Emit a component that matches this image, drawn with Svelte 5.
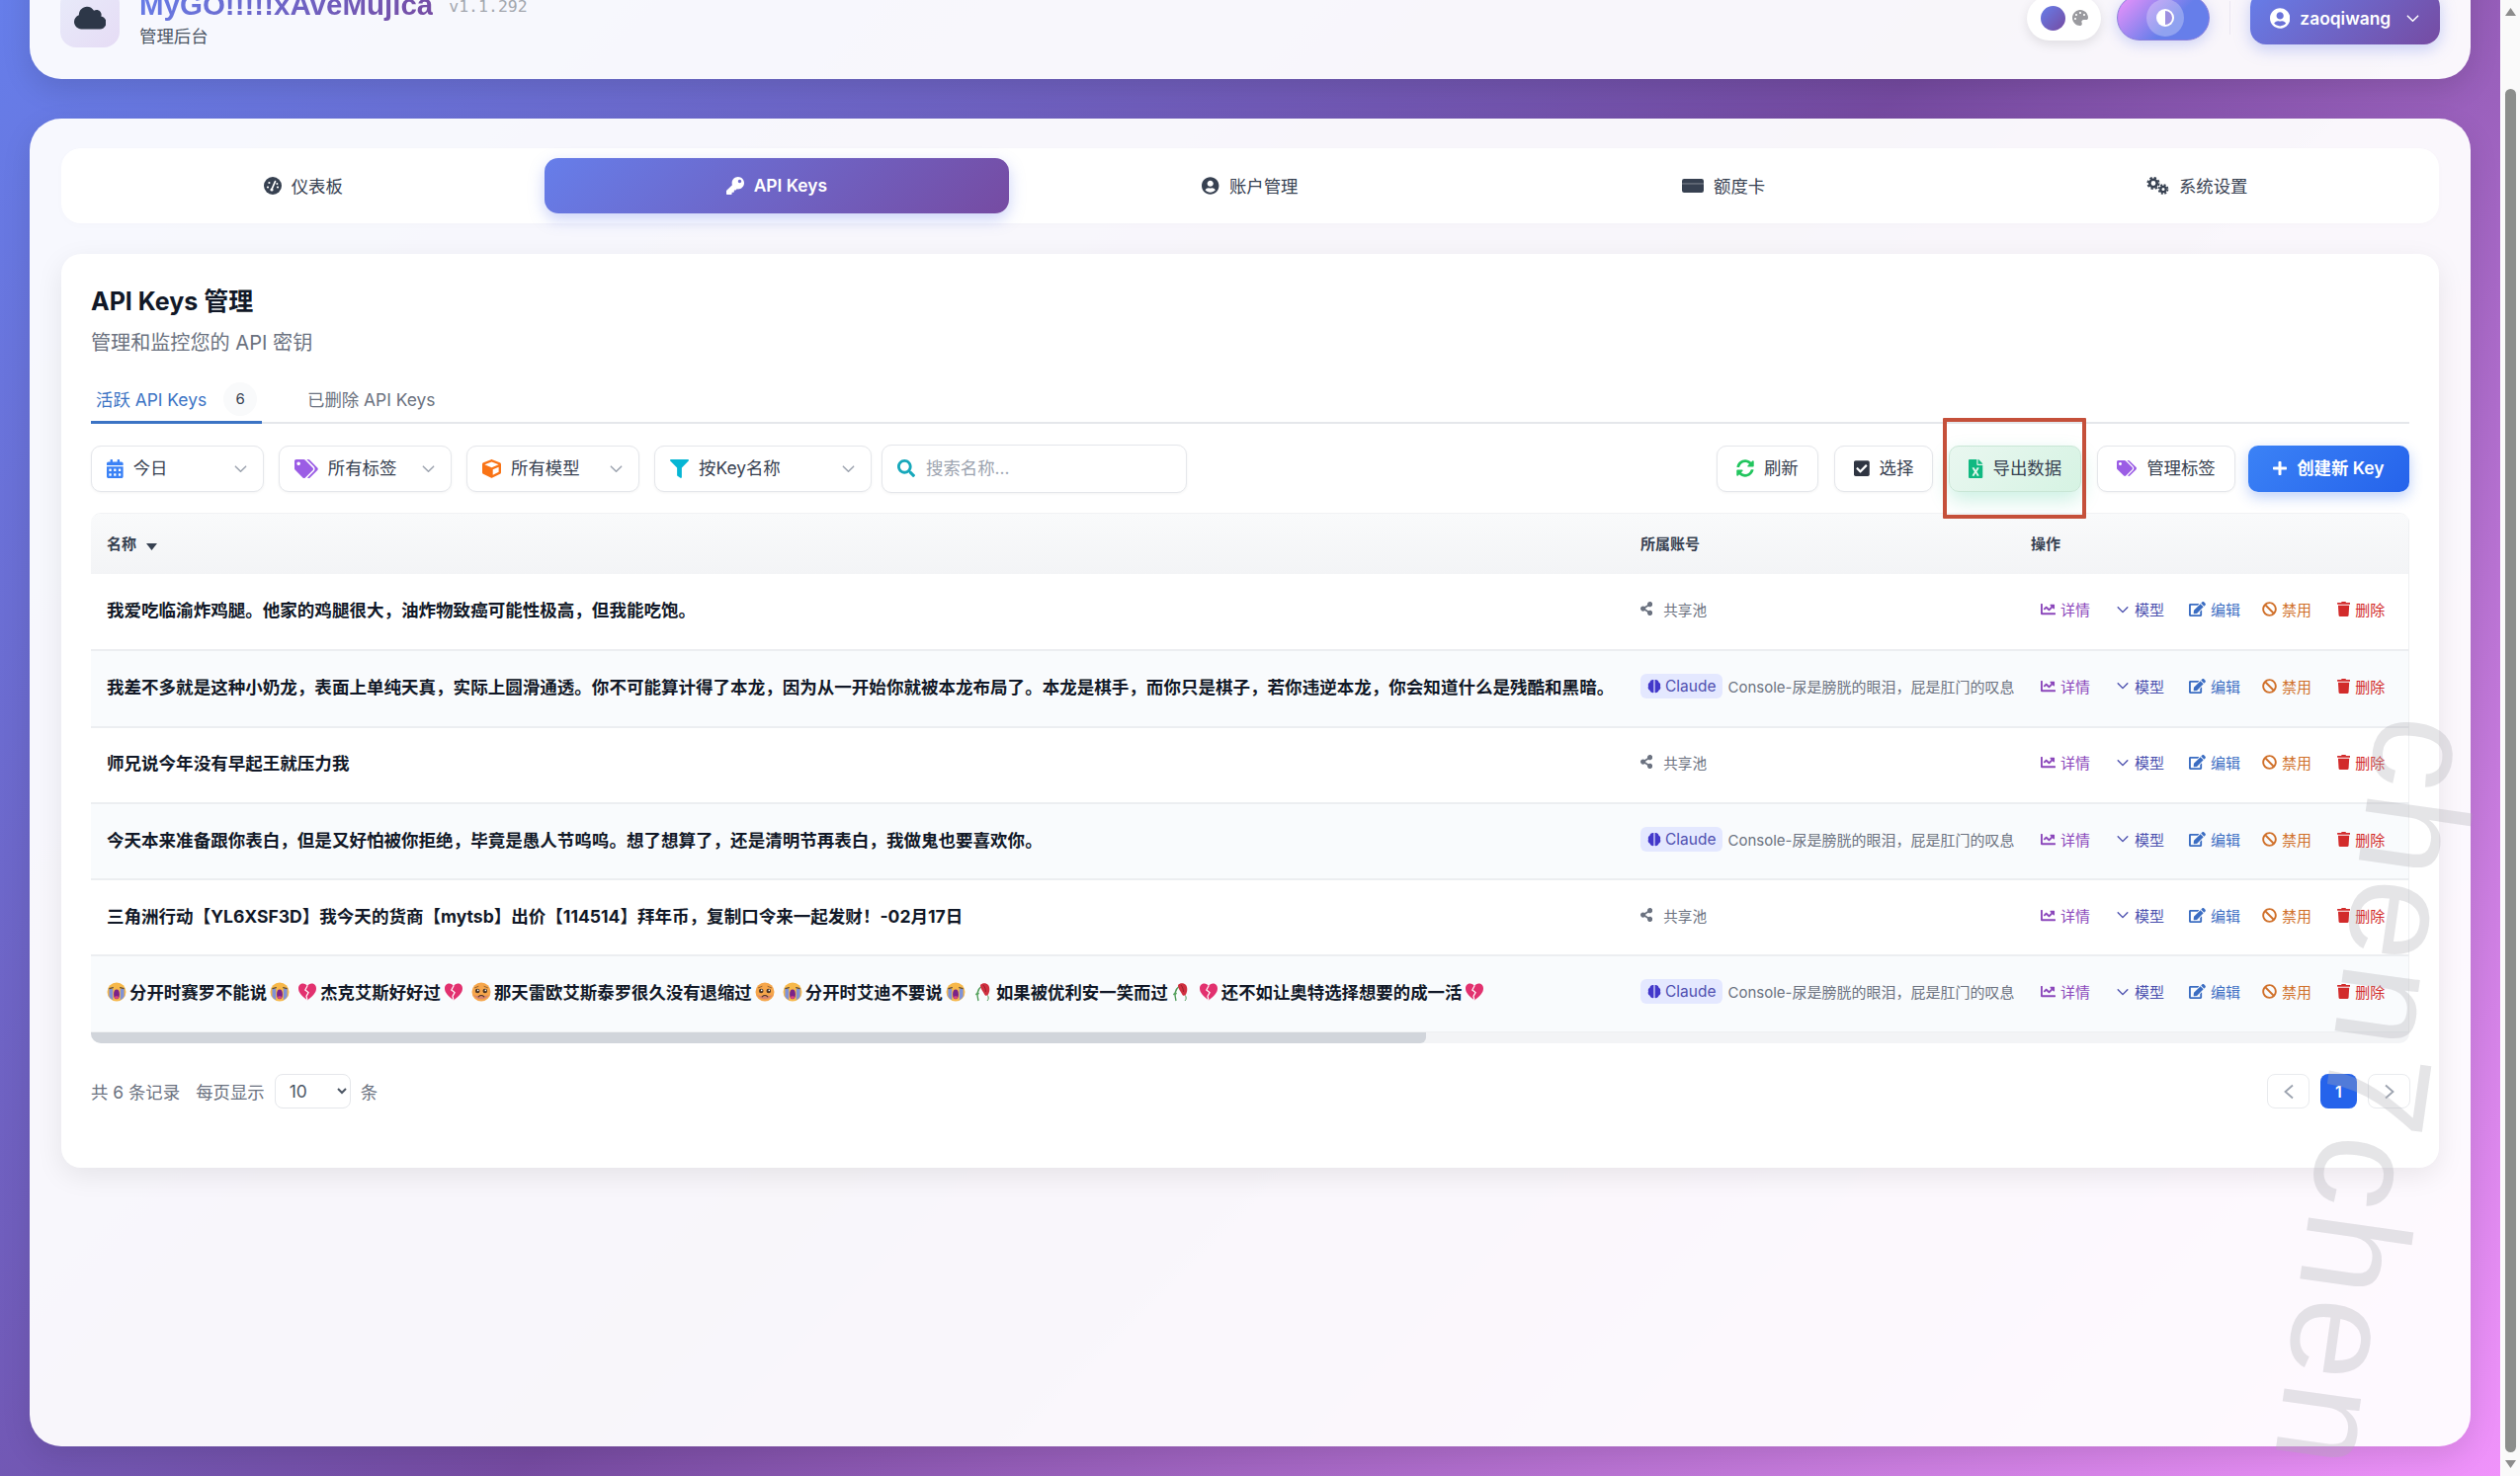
<script>
const ICONS = {
  cloud:[640,512,"M537.6 226.6c4.1-10.7 6.4-22.4 6.4-34.6 0-53-43-96-96-96-19.7 0-38.1 6-53.3 16.2C367 64.2 315.3 32 256 32c-88.4 0-160 71.6-160 160 0 2.7.1 5.4.2 8.1C40.2 219.8 0 273.2 0 336c0 79.5 64.5 144 144 144h368c70.7 0 128-57.3 128-128 0-61.9-44-113.6-102.4-125.4z"],
  key:[512,512,"M512 176.001C512 273.203 433.202 352 336 352c-11.22 0-22.19-1.062-32.827-3.069l-24.012 27.014A23.999 23.999 0 0 1 261.223 384H224v40c0 13.255-10.745 24-24 24h-40v40c0 13.255-10.745 24-24 24H24c-13.255 0-24-10.745-24-24v-78.059c0-6.365 2.529-12.47 7.029-16.971l161.802-161.802C163.108 213.814 160 195.271 160 176 160 78.798 238.797.001 335.999 0 433.488-.001 512 78.511 512 176.001zM336 128c0 26.51 21.49 48 48 48s48-21.49 48-48-21.49-48-48-48-48 21.49-48 48z"],
  user:[496,512,"M248 8C111 8 0 119 0 256s111 248 248 248 248-111 248-248S385 8 248 8zm0 96c48.6 0 88 39.4 88 88s-39.4 88-88 88-88-39.4-88-88 39.4-88 88-88zm0 344c-58.7 0-111.3-26.6-146.5-68.2 18.8-35.4 55.6-59.8 98.5-59.8 2.4 0 4.8.4 7.1 1.1 13 4.2 26.6 6.9 40.9 6.9 14.3 0 28-2.7 40.9-6.9 2.3-.7 4.7-1.1 7.1-1.1 42.9 0 79.7 24.4 98.5 59.8C359.3 421.4 306.7 448 248 448z"],
  tags:[640,512,"M497.941 225.941L286.059 14.059A48 48 0 0 0 252.118 0H48C21.49 0 0 21.49 0 48v204.118a48 48 0 0 0 14.059 33.941l211.882 211.882c18.744 18.745 49.136 18.746 67.882 0l204.118-204.118c18.745-18.745 18.745-49.137 0-67.882zM112 160c-26.51 0-48-21.49-48-48s21.49-48 48-48 48 21.49 48 48-21.49 48-48 48zm513.941 133.823L421.823 497.941c-18.745 18.745-49.137 18.745-67.882 0l-.36-.36L527.64 323.522c16.999-16.999 26.36-39.6 26.36-63.64s-9.362-46.641-26.36-63.64L331.397 0h48.721a48 48 0 0 1 33.941 14.059l211.882 211.882c18.745 18.745 18.745 49.137 0 67.882z"],
  filter:[512,512,"M487.976 0H24.028C2.71 0-8.047 25.866 7.058 40.971L192 225.941V432c0 7.831 3.821 15.17 10.237 19.662l80 55.98C298.02 518.69 320 507.493 320 487.98V225.941l184.947-184.97C520.021 25.896 509.338 0 487.976 0z"],
  search:[512,512,"M505 442.7L405.3 343c-4.5-4.5-10.6-7-17-7H372c27.6-35.3 44-79.7 44-128C416 93.1 322.9 0 208 0S0 93.1 0 208s93.1 208 208 208c48.3 0 92.7-16.4 128-44v16.3c0 6.4 2.5 12.5 7 17l99.7 99.7c9.4 9.4 24.6 9.4 33.9 0l28.3-28.3c9.4-9.4 9.4-24.6.1-34zM208 336c-70.7 0-128-57.2-128-128 0-70.7 57.2-128 128-128 70.7 0 128 57.2 128 128 0 70.7-57.2 128-128 128z"],
  sync:[512,512,"M370.72 133.28C339.458 104.008 298.888 87.962 255.848 88c-77.458.068-144.328 53.178-162.791 126.85-1.344 5.363-6.122 9.15-11.651 9.15H24.103c-7.498 0-13.194-6.807-11.807-14.176C33.933 94.924 134.813 8 256 8c66.448 0 126.791 26.136 171.315 68.685L463.03 40.97C478.149 25.851 504 36.559 504 57.941V192c0 13.255-10.745 24-24 24H345.941c-21.382 0-32.09-25.851-16.971-40.971l41.75-41.749zM32 296h134.059c21.382 0 32.09 25.851 16.971 40.971l-41.75 41.75c31.262 29.273 71.835 45.319 114.876 45.28 77.418-.07 144.315-53.144 162.787-126.849 1.344-5.363 6.122-9.15 11.651-9.15h57.304c7.498 0 13.194 6.807 11.807 14.176C478.067 417.076 377.187 504 256 504c-66.448 0-126.791-26.136-171.315-68.685L48.97 471.03C33.851 486.149 8 475.441 8 454.059V320c0-13.255 10.745-24 24-24z"],
  check:[448,512,"M400 480H48c-26.51 0-48-21.49-48-48V80c0-26.51 21.49-48 48-48h352c26.51 0 48 21.49 48 48v352c0 26.51-21.49 48-48 48zm-204.686-98.059l184-184c6.248-6.248 6.248-16.379 0-22.627l-22.627-22.627c-6.248-6.248-16.379-6.249-22.628 0L184 302.745l-69.059-69.059c-6.248-6.248-16.379-6.248-22.628 0L69.686 256.313c-6.248 6.248-6.248 16.379 0 22.627l104 104c6.249 6.25 16.379 6.25 22.628.001z"],
  excel:[384,512,"M224 136V0H24C10.7 0 0 10.7 0 24v464c0 13.3 10.7 24 24 24h336c13.3 0 24-10.7 24-24V160H248c-13.2 0-24-10.8-24-24zm60.1 106.5L224 336l60.1 93.5c5.1 8-.6 18.5-10.1 18.5h-34.9c-4.4 0-8.5-2.4-10.6-6.3C208.9 405.5 192 373 192 373c-6.4 14.8-10 20-36.6 68.8-2.1 3.9-6.1 6.3-10.5 6.3H110c-9.5 0-15.2-10.5-10.1-18.5l60.3-93.5-60.3-93.5c-5.2-8 .6-18.5 10.1-18.5h34.8c4.4 0 8.5 2.4 10.6 6.3 26.1 48.8 20 33.6 36.6 68.5 0 0 6.1-11.7 36.6-68.5 2.1-3.9 6.2-6.3 10.6-6.3H274c9.5-.1 15.2 10.4 10.1 18.4zM384 121.9v6.1H256V0h6.1c6.4 0 12.5 2.5 17 7l97.9 98c4.5 4.5 7 10.6 7 16.9z"],
  edit:[576,512,"M402.6 83.2l90.2 90.2c3.8 3.8 3.8 10 0 13.8L274.4 405.6l-92.8 10.3c-12.4 1.4-22.9-9.1-21.5-21.5l10.3-92.8L388.8 83.2c3.8-3.8 10-3.8 13.8 0zm162-22.9l-48.8-48.8c-15.2-15.2-39.9-15.2-55.2 0l-35.4 35.4c-3.8 3.8-3.8 10 0 13.8l90.2 90.2c3.8 3.8 10 3.8 13.8 0l35.4-35.4c15.2-15.3 15.2-40 0-55.2zM384 346.2V448H64V128h229.8c3.2 0 6.2-1.3 8.5-3.5l40-40c7.6-7.6 2.2-20.5-8.5-20.5H48C21.5 64 0 85.5 0 112v352c0 26.5 21.5 48 48 48h352c26.5 0 48-21.5 48-48V306.2c0-10.7-12.9-16-20.5-8.5l-40 40c-2.2 2.3-3.5 5.3-3.5 8.5z"],
  ban:[512,512,"M256 8C119.034 8 8 119.033 8 256s111.034 248 248 248 248-111.034 248-248S392.967 8 256 8zm130.108 117.892c65.448 65.448 70 165.481 20.677 235.637L150.47 105.216c70.204-49.356 170.226-44.735 235.638 20.676zM125.892 386.108c-65.448-65.448-70-165.481-20.677-235.637L361.53 406.784c-70.203 49.356-170.226 44.736-235.638-20.676z"],
  trash:[448,512,"M432 32H312l-9.4-18.7A24 24 0 0 0 281.1 0H166.8a23.72 23.72 0 0 0-21.4 13.3L136 32H16A16 16 0 0 0 0 48v32a16 16 0 0 0 16 16h416a16 16 0 0 0 16-16V48a16 16 0 0 0-16-16zM53.2 467a48 48 0 0 0 47.9 45h245.8a48 48 0 0 0 47.9-45L416 128H32z"],
  chart:[512,512,"M496 384H64V80c0-8.84-7.16-16-16-16H16C7.16 64 0 71.16 0 80v336c0 17.67 14.33 32 32 32h464c8.84 0 16-7.16 16-16v-32c0-8.84-7.16-16-16-16zM464 96H345.94c-21.38 0-32.09 25.85-16.97 40.97l32.4 32.4L288 242.75l-73.37-73.37c-12.5-12.5-32.76-12.5-45.25 0l-68.69 68.69c-6.25 6.25-6.25 16.38 0 22.63l22.62 22.62c6.25 6.25 16.38 6.25 22.63 0L192 237.25l73.37 73.37c12.5 12.5 32.76 12.5 45.25 0l96-96 32.4 32.4c15.12 15.12 40.97 4.41 40.97-16.97V112c.01-8.84-7.15-16-15.99-16z"],
  palette:[512,512,"M204.3 5C104.9 24.4 24.8 104.3 5.2 203.4c-37 187 131.7 326.4 258.8 306.7 41.2-6.4 61.4-54.6 42.5-91.7-23.1-45.4 9.9-98.4 60.9-98.4h79.7c35.8 0 64.8-29.6 64.9-65.3C511.5 97.1 368.1-26.9 204.3 5zM96 320c-17.7 0-32-14.3-32-32s14.3-32 32-32 32 14.3 32 32-14.3 32-32 32zm32-128c-17.7 0-32-14.3-32-32s14.3-32 32-32 32 14.3 32 32-14.3 32-32 32zm128-64c-17.7 0-32-14.3-32-32s14.3-32 32-32 32 14.3 32 32-14.3 32-32 32zm128 64c-17.7 0-32-14.3-32-32s14.3-32 32-32 32 14.3 32 32-14.3 32-32 32z"],
  cube:[512,512,"M239.1 6.3l-208 78c-18.7 7-31.1 25-31.1 45v225.1c0 18.2 10.3 34.8 26.5 42.9l208 104c13.5 6.8 29.4 6.8 42.9 0l208-104c16.3-8.1 26.5-24.8 26.5-42.9V129.3c0-20-12.4-37.9-31.1-44.9l-208-78C262 2.2 250 2.2 239.1 6.3zM256 68.4l192 72v1.1l-192 78-192-78v-1.1l192-72zm32 356V275.5l160-65v133.9l-160 80z"],
  share:[448,512,"M352 320c-22.608 0-43.387 7.819-59.79 20.895l-102.486-64.054a96.551 96.551 0 0 0 0-41.683l102.486-64.054C308.613 184.181 329.392 192 352 192c53.019 0 96-42.981 96-96S405.019 0 352 0s-96 42.981-96 96c0 7.158.79 14.13 2.276 20.841L155.79 180.895C139.387 167.819 118.608 160 96 160c-53.019 0-96 42.981-96 96s42.981 96 96 96c22.608 0 43.387-7.819 59.79-20.895l102.486 64.054A96.301 96.301 0 0 0 256 416c0 53.019 42.981 96 96 96s96-42.981 96-96-42.981-96-96-96z"],
  calendar:[448,512,"M0 464c0 26.5 21.5 48 48 48h352c26.5 0 48-21.5 48-48V192H0v272zm320-196c0-6.6 5.4-12 12-12h40c6.6 0 12 5.4 12 12v40c0 6.6-5.4 12-12 12h-40c-6.6 0-12-5.4-12-12v-40zm0 128c0-6.6 5.4-12 12-12h40c6.6 0 12 5.4 12 12v40c0 6.6-5.4 12-12 12h-40c-6.6 0-12-5.4-12-12v-40zM192 268c0-6.6 5.4-12 12-12h40c6.6 0 12 5.4 12 12v40c0 6.6-5.4 12-12 12h-40c-6.6 0-12-5.4-12-12v-40zm0 128c0-6.6 5.4-12 12-12h40c6.6 0 12 5.4 12 12v40c0 6.6-5.4 12-12 12h-40c-6.6 0-12-5.4-12-12v-40zM64 268c0-6.6 5.4-12 12-12h40c6.6 0 12 5.4 12 12v40c0 6.6-5.4 12-12 12H76c-6.6 0-12-5.4-12-12v-40zm0 128c0-6.6 5.4-12 12-12h40c6.6 0 12 5.4 12 12v40c0 6.6-5.4 12-12 12H76c-6.6 0-12-5.4-12-12v-40zM400 64h-48V16c0-8.8-7.2-16-16-16h-32c-8.8 0-16 7.2-16 16v48H160V16c0-8.8-7.2-16-16-16h-32c-8.8 0-16 7.2-16 16v48H48C21.5 64 0 85.5 0 112v48h448v-48c0-26.5-21.5-48-48-48z"],
  plus:[448,512,"M416 208H272V64c0-17.67-14.33-32-32-32h-32c-17.67 0-32 14.33-32 32v144H32c-17.67 0-32 14.33-32 32v32c0 17.67 14.33 32 32 32h144v144c0 17.67 14.33 32 32 32h32c17.67 0 32-14.33 32-32V304h144c17.67 0 32-14.33 32-32v-32c0-17.67-14.33-32-32-32z"]
};

const navs = [
  { id: 'gauge', label: '仪表板' },
  { id: 'key', label: 'API Keys', active: true },
  { id: 'user', label: '账户管理' },
  { id: 'card', label: '额度卡' },
  { id: 'cogs', label: '系统设置' }
];
const filters = [
  { icon: 'calendar', label: '今日', cls: 'blue', wide: false },
  { icon: 'tags', label: '所有标签', cls: 'violet', wide: false },
  { icon: 'cube', label: '所有模型', cls: 'orange', wide: false },
  { icon: 'filter', label: '按Key名称', cls: 'cyan', wide: true }
];
const rows = [
  { text: '我爱吃临渝炸鸡腿。他家的鸡腿很大，油炸物致癌可能性极高，但我能吃饱。', shared: true },
  { text: '我差不多就是这种小奶龙，表面上单纯天真，实际上圆滑通透。你不可能算计得了本龙，因为从一开始你就被本龙布局了。本龙是棋手，而你只是棋子，若你违逆本龙，你会知道什么是残酷和黑暗。', shared: false },
  { text: '师兄说今年没有早起王就压力我', shared: true },
  { text: '今天本来准备跟你表白，但是又好怕被你拒绝，毕竟是愚人节呜呜。想了想算了，还是清明节再表白，我做鬼也要喜欢你。', shared: false },
  { text: '三角洲行动【YL6XSF3D】我今天的货商【mytsb】出价【114514】拜年币，复制口令来一起发财！-02月17日', shared: true },
  { parts: [
      ['cry', '分开时赛罗不能说'],
      ['heart', '杰克艾斯好好过'],
      ['sad', '那天雷欧艾斯泰罗很久没有退缩过'],
      ['cry', '分开时艾迪不要说'],
      ['rose', '如果被优利安一笑而过'],
      ['heart', '还不如让奥特选择想要的成一活']
    ], shared: false }
];
</script>

{#snippet ic(name, size)}
  <svg class="ic" width={size * ICONS[name][0] / ICONS[name][1]} height={size} viewBox="0 0 {ICONS[name][0]} {ICONS[name][1]}" aria-hidden="true"><path fill="currentColor" d={ICONS[name][2]} /></svg>
{/snippet}

{#snippet chev(size)}
  <svg class="ic" width={size} height={size} viewBox="0 0 16 16" aria-hidden="true"><path d="M2.5 5.5 8 11l5.5-5.5" fill="none" stroke="currentColor" stroke-width="1.6" stroke-linecap="round" stroke-linejoin="round" /></svg>
{/snippet}

{#snippet emoji(kind)}
  <svg class="emo" width="20" height="20" viewBox="0 0 20 20" aria-hidden="true">
    {#if kind === 'cry'}
      <circle cx="10" cy="10" r="9.5" fill="#f7b84a" />
      <path d="M2.4 7h3.8v11.2a9.4 9.4 0 0 1-3.8-3.4zM13.8 7h3.8v7.8a9.4 9.4 0 0 1-3.8 3.4z" fill="#7f92d8" />
      <path d="M2.8 6.6 6.4 5.6M17.2 6.6l-3.6-1" stroke="#5b4a3a" stroke-width="1.1" stroke-linecap="round" />
      <ellipse cx="10" cy="12.4" rx="2.9" ry="4.8" fill="#7a2289" />
      <ellipse cx="10" cy="15.6" rx="2" ry="1.3" fill="#e0457f" />
    {:else if kind === 'heart'}
      <path d="M10 18.4C4 13.8 1 10.6 1 6.5 1 3.5 3.2 1.6 5.6 1.6c1.8 0 3.4 1 4.4 2.8 1-1.8 2.6-2.8 4.4-2.8C16.8 1.6 19 3.5 19 6.5c0 4.1-3 7.300-9 11.900z" fill="#e2316f" />
      <path d="M10 4 7.800 8l3.300 2.600L9 14.400 10 18.500" fill="none" stroke="#fff" stroke-width="1.200" />
    {:else if kind === 'sad'}
      <circle cx="10" cy="10" r="9.5" fill="#f6a64b" />
      <path d="M1.500 12a9.500 9.500 0 0 0 17 0c-2 3-5 1.500-8.500 1.500S3.500 15 1.500 12z" fill="#c26a8a" opacity=".55" />
      <circle cx="6.200" cy="9" r="2.300" fill="#4a3324" /><circle cx="13.800" cy="9" r="2.300" fill="#4a3324" />
      <circle cx="6.700" cy="8.400" r=".8" fill="#fff" /><circle cx="14.300" cy="8.400" r=".8" fill="#fff" />
      <path d="M7.200 14.800c1.600-1.500 4-1.500 5.600 0" fill="none" stroke="#4a3324" stroke-width="1.100" stroke-linecap="round" />
      <path d="M3.500 5.800 7 4.400M16.500 5.800 13 4.400" stroke="#8a5a2a" stroke-width=".9" stroke-linecap="round" />
    {:else}
      <path d="M5 19C3.500 14 3.500 8 8 4.500" fill="none" stroke="#4e9a57" stroke-width="1.400" />
      <path d="M6 11C3.500 10 2.500 11 2 13c2 .5 3.500 0 4-2z" fill="#5aa661" />
      <path d="M14 19c2-2 1-4 .5-5.500" fill="none" stroke="#4e9a57" stroke-width="1" />
      <path d="M7 3c2-2.500 6-2.500 8 0 2 2.800 1.500 7 0 9.500-1.200 1.800-3 1.800-3.800 0C10 9.500 7.500 8 7 3z" fill="#cf2f3f" />
      <path d="M10 3c1.500 2 2.500 4 2.500 7" fill="none" stroke="#8d1a2a" stroke-width=".8" />
    {/if}
  </svg>
{/snippet}

<div class="root">
  <div class="viewport">
    <header class="head">
      <div class="brand">
        <div class="logo">{@render ic('cloud', 26)}</div>
        <div class="brand-text">
          <div class="title-line">
            <span class="title">MyGO!!!!!xAveMujica</span>
            <span class="ver">v1.1.292</span>
          </div>
          <div class="sub">管理后台</div>
        </div>
      </div>
      <div class="head-right">
        <div class="color-pill">
          <span class="dot"></span>
          <span class="pal">{@render ic('palette', 16)}</span>
        </div>
        <div class="toggle">
          <span class="knob">
            <svg width="20" height="20" viewBox="0 0 20 20" aria-hidden="true"><circle cx="10" cy="10" r="9" fill="#fff" /><path d="M10 3a7 7 0 0 1 0 14z" fill="#9d8fe0" /></svg>
          </span>
        </div>
        <span class="vline"></span>
        <div class="userbtn">
          {@render ic('user', 21)}
          <span class="uname">zaoqiwang</span>
          {@render chev(15)}
        </div>
      </div>
    </header>

    <main class="main">
      <nav class="nav">
        {#each navs as n}
          <div class="navtab" class:active={n.active}>
            {#if n.id === 'gauge'}
              <svg class="ic" width="18" height="18" viewBox="0 0 18 18" aria-hidden="true">
                <circle cx="9" cy="9" r="9" fill="currentColor" />
                <path d="M8 12.500 11.500 4.600" stroke="#fff" stroke-width="1.700" stroke-linecap="round" />
                <circle cx="8" cy="13" r="1.600" fill="#fff" />
                <circle cx="4" cy="10.500" r="1.100" fill="#fff" /><circle cx="5.400" cy="6" r="1.100" fill="#fff" /><circle cx="14" cy="10.500" r="1.100" fill="#fff" /><circle cx="13.400" cy="7" r="1" fill="#fff" />
              </svg>
            {:else if n.id === 'cogs'}
              <svg class="ic" width="23" height="18" viewBox="0 0 23 18" aria-hidden="true">
                <circle cx="7" cy="6.500" r="3.700" fill="none" stroke="currentColor" stroke-width="2.600" />
                <circle cx="7" cy="6.500" r="5.600" fill="none" stroke="currentColor" stroke-width="1.900" stroke-dasharray="2.400 2" />
                <circle cx="17" cy="12.500" r="2.700" fill="none" stroke="currentColor" stroke-width="2.300" />
                <circle cx="17" cy="12.500" r="4.500" fill="none" stroke="currentColor" stroke-width="1.700" stroke-dasharray="2 1.550" />
              </svg>
            {:else if n.id === 'card'}
              <svg class="ic" width="22" height="18" viewBox="0 0 22 18" aria-hidden="true">
                <rect y="2" width="22" height="14" rx="2.200" fill="currentColor" />
                <rect y="6.500" width="22" height=".9" fill="#8a8f99" />
              </svg>
            {:else}
              {@render ic(n.id, 18)}
            {/if}
            <span class="lift">{n.label}</span>
          </div>
        {/each}
      </nav>

      <section class="panel">
        <h1 class="ptitle">API Keys 管理</h1>
        <p class="psub">管理和监控您的 API 密钥</p>

        <div class="tabs">
          <div class="tab on">活跃 API Keys <span class="count">6</span></div>
          <div class="tab">已删除 API Keys</div>
        </div>

        <div class="toolbar">
          <div class="tgroup">
            {#each filters as f}
              <div class="fsel" class:wide={f.wide}>
                <span class="ficon {f.cls}">{@render ic(f.icon, 19)}</span>
                <span class="ftext lift2">{f.label}</span>
                <span class="fchev">{@render chev(15)}</span>
              </div>
            {/each}
            <label class="search">
              <span class="ficon cyan2">{@render ic('search', 18)}</span>
              <input placeholder="搜索名称..." />
            </label>
          </div>
          <div class="tgroup actions-r">
            <button class="btn"><span class="green">{@render ic('sync', 18)}</span><span class="lift2">刷新</span></button>
            <button class="btn"><span class="dark">{@render ic('check', 18)}</span><span class="lift2">选择</span></button>
            <button class="btn export">
              <span class="emerald">{@render ic('excel', 19)}</span><span class="lift2">导出数据</span>
              <span class="redbox"></span>
            </button>
            <button class="btn"><span class="violet">{@render ic('tags', 16)}</span><span class="lift2">管理标签</span></button>
            <button class="btn primary">{@render ic('plus', 16)}<span class="lift2">创建新 Key</span></button>
          </div>
        </div>

        <div class="tablewrap">
          <table>
            <colgroup><col class="c1" /><col class="c2" /><col class="c3" /></colgroup>
            <thead>
              <tr>
                <th><span class="sorth">名称 <svg width="11" height="7" viewBox="0 0 11 7" aria-hidden="true"><path d="M0 0h11L5.500 7z" fill="#374151" /></svg></span></th>
                <th>所属账号</th>
                <th>操作</th>
              </tr>
            </thead>
            <tbody>
              {#each rows as r}
                <tr>
                  <td class="name">
                    {#if r.parts}
                      <span class="emorow">
                        {#each r.parts as p}
                          <span class="chunk">{@render emoji(p[0])}<span>{p[1]}</span>{@render emoji(p[0])}</span>
                        {/each}
                      </span>
                    {:else}
                      {r.text}
                    {/if}
                  </td>
                  <td>
                    {#if r.shared}
                      <span class="shared">{@render ic('share', 14)}<span>共享池</span></span>
                    {:else}
                      <span class="acct">
                        <span class="badge">
                          <svg width="14" height="15" viewBox="0 0 14 15" aria-hidden="true"><path d="M6.400 1C4.200.6 2.700 2 2.600 3.400 1 4.200.4 6 1 7.500.2 9 .8 11.200 2.500 11.800 3 13.500 4.800 14.500 6.400 14zM7.600 1c2.200-.4 3.700 1 3.800 2.400 1.600.8 2.200 2.600 1.600 4.100.8 1.500.2 3.700-1.500 4.300-.5 1.700-2.300 2.700-3.900 2.200z" fill="#4338ca" /></svg>
                          Claude
                        </span>
                        <span class="cons">Console-尿是膀胱的眼泪，屁是肛门的叹息</span>
                      </span>
                    {/if}
                  </td>
                  <td>
                    <div class="ops">
                      <span class="op o1">{@render ic('chart', 15)}详情</span>
                      <span class="op o2">{@render chev(14)}模型</span>
                      <span class="op o3">{@render ic('edit', 15)}编辑</span>
                      <span class="op o4">{@render ic('ban', 15)}禁用</span>
                      <span class="op o5">{@render ic('trash', 15)}删除</span>
                    </div>
                  </td>
                </tr>
              {/each}
            </tbody>
          </table>
          <div class="hscroll"><div class="hthumb"></div></div>
        </div>

        <div class="foot">
          <div class="foot-l">
            <span>共 6 条记录</span>
            <span class="per">每页显示</span>
            <select class="size"><option>10</option><option>20</option><option>50</option></select>
            <span>条</span>
          </div>
          <div class="pager">
            <span class="pg">
              <svg width="12" height="16" viewBox="0 0 12 16" aria-hidden="true"><path d="M10 1.500 2.500 8l7.500 6.500" fill="none" stroke="currentColor" stroke-width="1.800" /></svg>
            </span>
            <span class="pg cur">1</span>
            <span class="pg">
              <svg width="12" height="16" viewBox="0 0 12 16" aria-hidden="true"><path d="M2 1.500 9.500 8 2 14.500" fill="none" stroke="currentColor" stroke-width="1.800" /></svg>
            </span>
          </div>
        </div>
      </section>
    </main>
  </div>

  <aside class="vscroll">
    <svg width="11" height="8" viewBox="0 0 11 8" aria-hidden="true"><path d="M5.500 0 11 8H0z" fill="#8c8c8c" /></svg>
    <div class="vthumb"></div>
    <svg width="11" height="8" viewBox="0 0 11 8" aria-hidden="true"><path d="M0 0h11L5.500 8z" fill="#8c8c8c" /></svg>
  </aside>

  <div class="watermark">chen7chen</div>
</div>

<style>
  :global(body) { margin: 0; background: #fff; }
  .root {
    position: relative;
    width: 2550px;
    height: 1494px;
    overflow: hidden;
    display: flex;
    font-family: Inter, "Noto Sans CJK SC", sans-serif;
    color: #374151;
    font-size: 17.4px;
  }
  .ic { display: block; flex: none; }
  .lift { padding-bottom: 1px; }
  .lift2 { padding-bottom: 3px; }
  .viewport {
    width: 2531px;
    height: 1494px;
    box-sizing: border-box;
    padding: 0 30px 0 30px;
    overflow: hidden;
    background: linear-gradient(135deg, #667eea 0%, #764ba2 50%, #f093fb 100%);
  }
  .head {
    margin-top: -44px;
    height: 124px;
    box-sizing: border-box;
    padding: 0 31px;
    display: flex;
    align-items: center;
    justify-content: space-between;
    background: rgba(255, 255, 255, .95);
    border-radius: 0 0 32px 32px;
    box-shadow: 0 10px 30px rgba(0, 0, 0, .12);
  }
  .brand { display: flex; align-items: center; gap: 20px; }
  .logo {
    width: 60px;
    height: 60px;
    border-radius: 16px;
    display: flex;
    align-items: center;
    justify-content: center;
    color: #2d3748;
    background: linear-gradient(135deg, #e8ebfa, #e6dcf5);
  }
  .brand-text { display: flex; flex-direction: column; }
  .title-line { display: flex; align-items: flex-start; gap: 16px; height: 36px; }
  .title {
    font-size: 29.500px;
    font-weight: 700;
    line-height: 36px;
    font-family: "Liberation Sans", sans-serif;
    background: linear-gradient(135deg, #667eea, #764ba2);
    -webkit-background-clip: text;
    background-clip: text;
    color: transparent;
  }
  .ver {
    font-size: 16.500px;
    line-height: 20px;
    margin-top: 10px;
    color: #a3a7ae;
    font-family: "DejaVu Sans Mono", monospace;
  }
  .sub { font-size: 17.4px; line-height: 24px; color: #4b5563; margin-top: 2px; }
  .head-right { display: flex; align-items: center; }
  .color-pill {
    width: 75px;
    height: 45px;
    box-sizing: border-box;
    padding-left: 14px;
    display: flex;
    align-items: center;
    gap: 7px;
    background: #fff;
    border-radius: 23px;
    box-shadow: 0 4px 12px rgba(0, 0, 0, .1);
  }
  .dot { width: 25px; height: 25px; border-radius: 50%; background: linear-gradient(135deg, #667eea, #764ba2); }
  .pal { color: #9a9a9f; }
  .toggle {
    width: 94px;
    height: 46px;
    margin-left: 16px;
    box-sizing: border-box;
    border: 1px solid #8a7fdc;
    border-radius: 23px;
    display: flex;
    align-items: center;
    justify-content: center;
    background: linear-gradient(135deg, #f093fb 0%, #667eea 60%, #667eea 100%);
    box-shadow: 0 4px 14px rgba(102, 126, 234, .3);
  }
  .knob {
    width: 38px;
    height: 38px;
    margin-left: 3px;
    border-radius: 50%;
    background: rgba(255, 255, 255, .28);
    display: flex;
    align-items: center;
    justify-content: center;
  }
  .vline { width: 1px; height: 34px; margin: 0 20px; background: #ebe7f2; }
  .userbtn {
    width: 192px;
    height: 54px;
    box-sizing: border-box;
    padding: 0 20px;
    display: flex;
    align-items: center;
    border-radius: 16px;
    color: #fff;
    background: linear-gradient(135deg, #667eea, #764ba2);
    box-shadow: 0 5px 16px rgba(102, 126, 234, .35);
  }
  .uname { margin-left: 10px; margin-right: auto; font-weight: 600; }
  .main {
    margin-top: 40px;
    height: 1344px;
    box-sizing: border-box;
    padding: 30px 32px;
    background: rgba(255, 255, 255, .95);
    border-radius: 32px;
    box-shadow: 0 10px 30px rgba(0, 0, 0, .1);
  }
  .nav {
    height: 76px;
    box-sizing: border-box;
    padding: 10px;
    display: flex;
    gap: 9.500px;
    background: #fff;
    border-radius: 20px;
    box-shadow: 0 2px 10px rgba(0, 0, 0, .015);
  }
  .navtab {
    flex: 1;
    display: flex;
    align-items: center;
    justify-content: center;
    gap: 10px;
    border-radius: 14px;
    color: #374151;
  }
  .navtab.active {
    color: #fff;
    font-weight: 600;
    background: linear-gradient(135deg, #667eea, #764ba2);
    box-shadow: 0 6px 16px rgba(102, 126, 234, .35);
  }
  .panel {
    margin-top: 31px;
    height: 925px;
    box-sizing: border-box;
    padding: 32px 30px 0;
    background: #fff;
    border-radius: 20px;
    box-shadow: 0 8px 28px rgba(0, 0, 0, .08);
  }
  .ptitle { margin: 0; font-size: 25px; line-height: 32px; font-weight: 700; color: #111827; }
  .psub { margin: 14px 0 0; font-size: 20.100px; line-height: 24px; color: #6b7280; }
  .tabs {
    margin-top: 23px;
    height: 47px;
    box-sizing: border-box;
    display: flex;
    gap: 41px;
    border-bottom: 2px solid #e5e7eb;
  }
  .tab { display: flex; align-items: center; height: 47px; box-sizing: border-box; padding: 0 0 4px 5px; font-size: 17.4px; color: #6b7280; }
  .tab.on { color: #3b73c4; border-bottom: 3px solid #3b73c4; padding: 0 0 1px 5px; width: 173px; }
  .count {
    width: 34px;
    height: 34px;
    margin-left: 17px;
    border-radius: 50%;
    background: #f9fafb;
    color: #374151;
    font-size: 15px;
    display: flex;
    align-items: center;
    justify-content: center;
  }
  .toolbar { margin-top: 21px; display: flex; justify-content: space-between; align-items: center; height: 48px; }
  .tgroup { display: flex; align-items: center; gap: 15px; }
  .fsel {
    width: 175px;
    height: 47px;
    box-sizing: border-box;
    padding: 0 15px;
    display: flex;
    align-items: center;
    background: #fff;
    border: 1px solid #e5e7eb;
    border-radius: 10px;
    box-shadow: 0 1px 3px rgba(0, 0, 0, .05);
  }
  .fsel.wide { width: 220px; }
  .ftext { margin-left: 10px; }
  .fchev { margin-left: auto; color: #9ca3af; }
  .blue { color: #3b82f6; }
  .violet { color: #9b5de5; }
  .orange { color: #f97316; }
  .cyan { color: #06b6d4; }
  .cyan2 { color: #17a8bb; }
  .green { color: #22c55e; }
  .dark { color: #2f3542; }
  .emerald { color: #10b981; }
  .search {
    width: 309px;
    height: 49px;
    margin-left: -5px;
    box-sizing: border-box;
    padding-left: 15px;
    display: flex;
    align-items: center;
    background: #fff;
    border: 1px solid #e5e7eb;
    border-radius: 10px;
    box-shadow: 0 1px 3px rgba(0, 0, 0, .05);
  }
  .search input {
    flex: 1;
    min-width: 0;
    margin-left: 9px;
    padding-bottom: 3px;
    border: 0;
    outline: 0;
    background: none;
    font: inherit;
    color: #374151;
  }
  .search input::placeholder { color: #9ca3af; }
  .actions-r { gap: 16px; }
  .btn {
    position: relative;
    height: 47px;
    box-sizing: border-box;
    padding: 0 19px;
    display: flex;
    align-items: center;
    gap: 10px;
    font: inherit;
    color: #374151;
    background: #fff;
    border: 1px solid #e5e7eb;
    border-radius: 10px;
    box-shadow: 0 1px 3px rgba(0, 0, 0, .05);
  }
  .btn.export {
    background: linear-gradient(135deg, #e9f7f0, #d6f3e3);
    border-color: #c9e6d6;
    box-shadow: 0 8px 20px rgba(16, 185, 129, .22);
  }
  .redbox {
    position: absolute;
    top: -29px;
    left: -7px;
    right: -6px;
    bottom: -28px;
    border: 4.500px solid #c5503a;
    border-radius: 1px;
    pointer-events: none;
  }
  .btn.primary {
    margin-left: -3px;
    padding: 0 25.500px;
    color: #fff;
    font-weight: 600;
    border: 0;
    background: linear-gradient(135deg, #3b82f6, #2563eb);
    box-shadow: 0 5px 14px rgba(37, 99, 235, .3);
  }
  .tablewrap {
    margin-top: 21px;
    border-top: 1px solid #f1f2f4;
    border-radius: 10px;
    overflow: hidden;
  }
  table { width: 100%; table-layout: fixed; border-collapse: collapse; border-right: 1px solid #eef0f2; }
  .c1 { width: 1552px; }
  .c2 { width: 395px; }
  th {
    height: 61px;
    box-sizing: border-box;
    padding: 0 16px 3px;
    text-align: left;
    font-size: 15px;
    font-weight: 700;
    color: #374151;
    background: linear-gradient(180deg, #f9fafb, #f3f4f6);
  }
  .sorth { display: inline-flex; align-items: center; gap: 10px; }
  .sorth svg { margin-top: 8px; }
  td {
    height: 77.300px;
    box-sizing: border-box;
    padding: 0 16px 5px;
    border-bottom: 2px solid #eceef1;
    white-space: nowrap;
  }
  tbody tr:nth-child(even) td { background: #f9fbfd; }
  tbody tr:last-child td { border-bottom: 1px solid #eef0f2; }
  .name { font-weight: 700; color: #111827; font-size: 17.550px; }
  .emorow { display: flex; align-items: center; gap: 8px; font-size: 17.4px; }
  .chunk { display: inline-flex; align-items: center; gap: 3px; }
  .emo { display: block; flex: none; }
  .shared { display: inline-flex; align-items: center; gap: 11px; color: #6b7280; font-size: 14.600px; }
  .acct { display: inline-flex; align-items: center; gap: 5px; }
  .badge {
    height: 25px;
    box-sizing: border-box;
    padding: 0 7px;
    display: inline-flex;
    align-items: center;
    gap: 4px;
    font-size: 15.500px;
    color: #4f4fb0;
    background: #e4e8ff;
    border-radius: 6px;
  }
  .cons { font-size: 15px; color: #6b7280; }
  .ops { display: flex; padding-left: 10px; }
  .op { display: inline-flex; align-items: center; gap: 5px; font-size: 15px; width: 75px; flex: none; }
  .o1 { color: #8b47bb; width: 76px; }
  .o2 { color: #4a4fae; width: 74px; }
  .o3 { color: #3b6dc2; width: 74px; }
  .o4 { color: #d0702a; width: 76px; }
  .o5 { color: #d22b2b; }
  .hscroll { height: 11px; background: #f3f4f6; border-radius: 0 0 6px 6px; }
  .hthumb { width: 1351px; height: 11px; background: #d1d5db; border-radius: 0 0 6px 6px; }
  .foot { margin-top: 31px; display: flex; justify-content: space-between; align-items: center; }
  .foot-l { display: flex; align-items: center; color: #6b7280; }
  .per { margin-left: 16px; }
  .size {
    width: 77px;
    height: 35px;
    margin: 0 10px;
    padding: 0 10px;
    font: inherit;
    color: #4b5563;
    background: #fff;
    border: 1px solid #e5e7eb;
    border-radius: 8px;
  }
  .pager { display: flex; align-items: center; gap: 11px; margin-right: -1px; }
  .pg {
    width: 43px;
    height: 35px;
    box-sizing: border-box;
    display: flex;
    align-items: center;
    justify-content: center;
    color: #9ca3af;
    background: #fff;
    border: 1px solid #e9ebee;
    border-radius: 8px;
  }
  .pg.cur { width: 37px; color: #fff; font-weight: 600; font-size: 16px; background: #2563eb; border: 0; }
  .vscroll {
    flex: 1;
    box-sizing: border-box;
    padding: 8px 4px 8px;
    display: flex;
    flex-direction: column;
    align-items: center;
    background: #fafafa;
    border-left: 1px solid #fff;
  }
  .vthumb { width: 11px; height: 1381px; margin: 74px 0 8px; border-radius: 6px; background: #8c8e8c; }
  .watermark {
    position: absolute;
    left: 2408px;
    top: 595px;
    font: 148px/1 "Liberation Sans", sans-serif;
    letter-spacing: 5px;
    color: rgba(175, 175, 180, .32);
    white-space: nowrap;
    transform-origin: 0 125px;
    transform: rotate(98deg);
    pointer-events: none;
  }
</style>
